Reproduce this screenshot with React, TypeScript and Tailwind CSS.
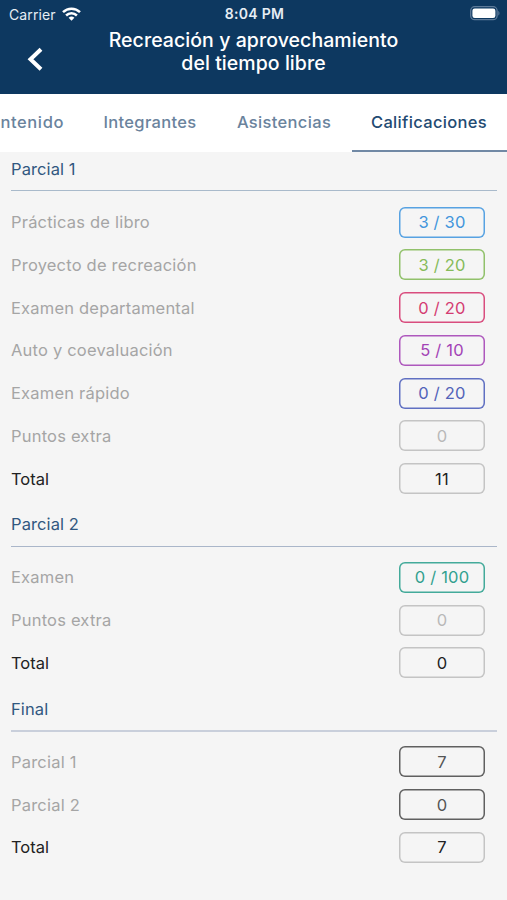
import React from 'react';
import clsx from 'clsx';

interface Grade {
  label: string;
  value: string;
  tone: string;
  strong?: boolean;
}

interface Section {
  title: string;
  rule: string;
  grades: Grade[];
}

const MUTED = 'text-[#b9b9b9] shadow-[inset_0_0_0_1.5px_#c4c4c4]';
const TOTAL = 'text-[#222222] shadow-[inset_0_0_0_1.5px_#c4c4c4]';
const DARK = 'text-[#555555] shadow-[inset_0_0_0_1.5px_#606060]';

const SECTIONS: Section[] = [
  {
    title: 'Parcial 1',
    rule: 'border-b border-[#a9bacb] mb-[9.25px]',
    grades: [
      { label: 'Prácticas de libro', value: '3 / 30', tone: 'text-[#4295dc] shadow-[inset_0_0_0_1.5px_#57a2e2]' },
      { label: 'Proyecto de recreación', value: '3 / 20', tone: 'text-[#86bb5a] shadow-[inset_0_0_0_1.5px_#91c16b]' },
      { label: 'Examen departamental', value: '0 / 20', tone: 'text-[#d43c72] shadow-[inset_0_0_0_1.5px_#d94d7e]' },
      { label: 'Auto y coevaluación', value: '5 / 10', tone: 'text-[#a343b5] shadow-[inset_0_0_0_1.5px_#ae58bd]' },
      { label: 'Examen rápido', value: '0 / 20', tone: 'text-[#5263b9] shadow-[inset_0_0_0_1.5px_#6070c2]' },
      { label: 'Puntos extra', value: '0', tone: MUTED },
      { label: 'Total', value: '11', tone: TOTAL, strong: true },
    ],
  },
  {
    title: 'Parcial 2',
    rule: 'border-b border-[#aab6c9] mb-[9.25px]',
    grades: [
      { label: 'Examen', value: '0 / 100', tone: 'text-[#32a08f] shadow-[inset_0_0_0_1.5px_#43aa9a]' },
      { label: 'Puntos extra', value: '0', tone: MUTED },
      { label: 'Total', value: '0', tone: TOTAL, strong: true },
    ],
  },
  {
    title: 'Final',
    rule: 'border-b-2 border-[#c9cfdb] mb-[8.4px]',
    grades: [
      { label: 'Parcial 1', value: '7', tone: DARK },
      { label: 'Parcial 2', value: '0', tone: DARK },
      { label: 'Total', value: '7', tone: TOTAL, strong: true },
    ],
  },
];

const StatusBar: React.FC = () => (
  <div className="grid grid-cols-3 items-center h-7 pl-[9px] pr-[7px] text-[14px] text-[#e6edf4]">
    <div className="flex items-center gap-[6px] tracking-[0.1px]">
      Carrier
      <svg className="w-[19px] h-[14px]" viewBox="0 0 19 14" fill="none" stroke="#ffffff" strokeWidth="2.5">
        <path d="M1 5.1a12.2 12.2 0 0 1 17 0" />
        <path d="M4.1 8.5a7.7 7.7 0 0 1 10.8 0" />
        <path d="M9.5 13.7 6.6 10.8a4.2 4.2 0 0 1 5.8 0z" fill="#ffffff" stroke="none" />
      </svg>
    </div>
    <div className="-mt-px text-center font-semibold tracking-[0.3px]">8:04 PM</div>
    <svg className="-mt-px justify-self-end w-[30px] h-[15px]" viewBox="0 0 30 15" fill="none">
      <rect x="0.7" y="0.7" width="26.4" height="13" rx="4" stroke="#5d7a99" strokeWidth="1.3" />
      <rect x="2.4" y="2.4" width="23" height="9.6" rx="2.3" fill="#ffffff" />
      <path d="M28.3 5v4.6c1.6-.6 1.6-4 0-4.6z" fill="#5d7a99" />
    </svg>
  </div>
);

const Header: React.FC = () => (
  <header className="h-[94px] bg-[#0d3860] text-white">
    <StatusBar />
    <div className="grid grid-cols-[68px_1fr_68px]">
      <button className="pl-[27px] pt-[17px]" aria-label="Regresar">
        <svg className="w-4 h-[26px]" viewBox="0 0 16 26" fill="none" stroke="currentColor" strokeWidth="4">
          <path d="M14 2.3 3.5 12.3 14 22.3" />
        </svg>
      </button>
      <h1 className="pt-px text-center text-[19.5px] leading-[23px] font-medium tracking-[0.06px]">
        Recreación y aprovechamiento
        <br />
        del tiempo libre
      </h1>
    </div>
  </header>
);

const Tabs: React.FC = () => (
  <nav className="flex h-[58px] overflow-hidden bg-white text-[16.5px] font-medium tracking-[0.33px] text-[#6a839d] whitespace-nowrap">
    <div className="w-[84px] shrink-0 flex justify-end pr-5 pt-[15.5px] tracking-[0.6px]">Contenido</div>
    <div className="w-[134px] shrink-0 text-center pr-[2px] pt-[15.5px]">Integrantes</div>
    <div className="w-[134px] shrink-0 text-center pr-[2px] pt-[15.5px]">Asistencias</div>
    <div className="w-[155px] shrink-0 text-center pr-px pt-[15.5px] text-[#234a72] border-b-2 border-[#7189a5]">Calificaciones</div>
  </nav>
);

const GradeRow: React.FC<{ grade: Grade }> = ({ grade }) => (
  <div className="flex items-center justify-between h-[42.75px] pr-3">
    <span className={grade.strong ? 'text-[#222222]' : 'text-[#a5a5a5] tracking-[0.2px]'}>{grade.label}</span>
    <span className={clsx('flex items-center justify-center w-[86px] h-[31px] rounded-[6px] tracking-[0.2px]', grade.tone)}>
      {grade.value}
    </span>
  </div>
);

export default function App() {
  return (
    <div className="h-[900px] overflow-hidden bg-[#f5f5f5] font-['Inter',sans-serif]">
      <Header />
      <Tabs />
      <main className="pl-[11px] pr-[10px] text-[16.5px] leading-6">
        {SECTIONS.map((section) => (
          <section key={section.title} className="pt-[12.5px] first:pt-[5px]">
            <h2 className={clsx('pb-[9.4px] text-[#315880] tracking-[0.1px]', section.rule)}>{section.title}</h2>
            {section.grades.map((grade) => (
              <GradeRow key={grade.label} grade={grade} />
            ))}
          </section>
        ))}
      </main>
    </div>
  );
}
